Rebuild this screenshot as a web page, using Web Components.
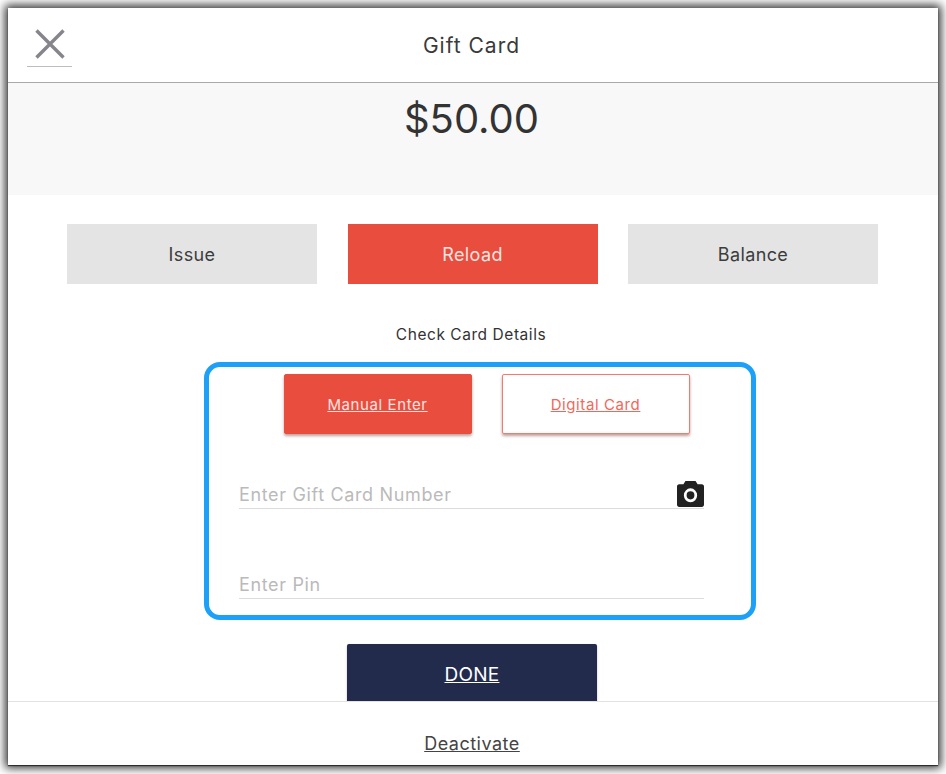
<!DOCTYPE html>
<html lang="en"><head><meta charset="utf-8"><title>Gift Card</title>
<style>
html,body{margin:0;height:100%;background:#fff;overflow:hidden}
body{font-family:Inter,"Open Sans","Liberation Sans",sans-serif;color:#333}
</style></head><body>
<gc-modal>
  <gc-header slot="header">Gift Card</gc-header>
  <gc-amount>$50.00</gc-amount>
  <gc-tabs>
    <gc-tab>Issue</gc-tab>
    <gc-tab active>Reload</gc-tab>
    <gc-tab>Balance</gc-tab>
  </gc-tabs>
  <gc-caption>Check Card Details</gc-caption>
  <gc-panel>
    <gc-switch slot="switch" filled>Manual Enter</gc-switch>
    <gc-switch slot="switch">Digital Card</gc-switch>
    <gc-field camera placeholder="Enter Gift Card Number"></gc-field>
    <gc-field placeholder="Enter Pin"></gc-field>
  </gc-panel>
  <gc-done>DONE</gc-done>
  <gc-footer slot="footer">Deactivate</gc-footer>
</gc-modal>
<script>
function def(name,css,html,init){
  customElements.define(name,class extends HTMLElement{
    constructor(){super();const r=this.attachShadow({mode:'open'});r.innerHTML='<style>'+css+'</style>'+html;}
    connectedCallback(){if(init)init(this,this.shadowRoot);}
  });
}
def('gc-modal',`
  :host{display:flex;flex-direction:column;box-sizing:border-box;width:930px;height:757px;margin:8px 0 0 8px;background:#fff;
    box-shadow:0 0 9px 3px rgba(0,0,0,.8),0 1px 1px rgba(0,0,0,.6);overflow:hidden}
  .body{flex:1;min-height:0;overflow:hidden;display:flex;flex-direction:column}
`,`<slot name="header"></slot><div class="body"><slot></slot></div><slot name="footer"></slot>`);
def('gc-header',`
  :host{display:flex;flex:none;align-items:center;justify-content:center;position:relative;height:75px;box-sizing:border-box;border-bottom:1px solid #a9a9a9;
    font-size:21px;letter-spacing:1px;color:#3a3a3a;padding-right:3px}
  .close{position:absolute;left:19px;top:14px;width:45px;height:45px;box-sizing:border-box;border-bottom:1px solid #bdbdbd;display:flex;justify-content:center}
  svg{display:block;width:45px;height:44px}
`,`<div class="close"><svg viewBox="0 0 45 44" fill="none" stroke="#85858c" stroke-width="3.4"><path d="M9.5 8.5L36.5 35.5M36.5 8.5L9.5 35.5"/></svg></div><slot></slot>`);
def('gc-amount',`
  :host{display:block;flex:none;height:112px;box-sizing:border-box;background:#f8f8f8;text-align:center;font-size:40px;line-height:72px;color:#333;padding-right:3px}
`,`<slot></slot>`);
def('gc-tabs',`
  :host{display:grid;flex:none;grid-template-columns:repeat(3,250px);gap:30.5px;margin:29px 0 0 59px}
`,`<slot></slot>`);
def('gc-tab',`
  :host{display:flex;align-items:center;justify-content:center;height:60px;background:#e4e4e4;color:#3c3c3c;font-size:18px;letter-spacing:.4px}
  :host([active]){background:#e84d3d;color:#fbe3e0}
`,`<slot></slot>`);
def('gc-caption',`
  :host{display:block;flex:none;text-align:center;margin-top:41px;font-size:15.5px;letter-spacing:.55px;line-height:20px;color:#333;padding-right:4px}
`,`<slot></slot>`);
def('gc-panel',`
  :host{display:block;flex:none;box-sizing:border-box;width:552px;height:258px;margin:17px 0 0 196px;border:5px solid #1da1f8;border-radius:16px;padding:7px 47px 0 30px}
  .row{display:flex;justify-content:center;gap:30px;margin:0 -30px 31px 0}
`,`<div class="row"><slot name="switch"></slot></div><slot></slot>`);
def('gc-switch',`
  :host{display:flex;align-items:center;justify-content:center;box-sizing:border-box;width:188px;height:60px;border-radius:2px;font-size:15px;letter-spacing:.6px;text-decoration:underline;
    background:#fff;color:#f0685a;border:1px solid #f47a6e;box-shadow:0 2px 3px rgba(90,20,10,.4)}
  :host([filled]){background:#e84d3d;color:#fbe3e0;border-color:#e84d3d}
`,`<slot></slot>`);
def('gc-field',`
  :host{display:flex;align-items:flex-end;justify-content:space-between;box-sizing:border-box;height:44px;border-bottom:1px solid #dcdcdc;margin-bottom:46px;color:#bababa;font-size:18px;letter-spacing:.65px;line-height:27px}
  svg{display:block;width:27px;height:26px;margin-bottom:1px;margin-right:0}
`,`<span id="t"></span><svg id="c" viewBox="2.2 3.6 25.6 23.4" preserveAspectRatio="none"><path fill="#222" d="M10.2 3.6h9.6l1.9 3h4.1c1.1 0 2 .9 2 2V25c0 1.1-.9 2-2 2H4.200c-1.1 0-2-.9-2-2V8.600c0-1.100.9-2 2-2h4.100z"/><circle cx="15" cy="16.500" r="5" fill="none" stroke="#fff" stroke-width="2.600"/></svg>`,
(h,r)=>{r.getElementById('t').textContent=h.getAttribute('placeholder');if(!h.hasAttribute('camera'))r.getElementById('c').remove();});
def('gc-done',`
  :host{display:flex;flex:none;align-items:center;justify-content:center;box-sizing:border-box;width:250px;height:60px;margin:24px 0 0 339px;background:#232b4d;color:#fff;border-radius:2px;font-size:19px;letter-spacing:.25px;text-decoration:underline;box-shadow:0 1px 2px rgba(0,0,0,.3)}
`,`<slot></slot>`);
def('gc-footer',`
  :host{display:flex;flex:none;align-items:center;justify-content:center;height:64px;box-sizing:border-box;border-top:1px solid #e2e2e2;background:#fff;font-size:18px;letter-spacing:.5px;text-decoration:underline;color:#444;padding:19px 2px 0 0;position:relative}
`,`<slot></slot>`);
</script>
</body></html>
